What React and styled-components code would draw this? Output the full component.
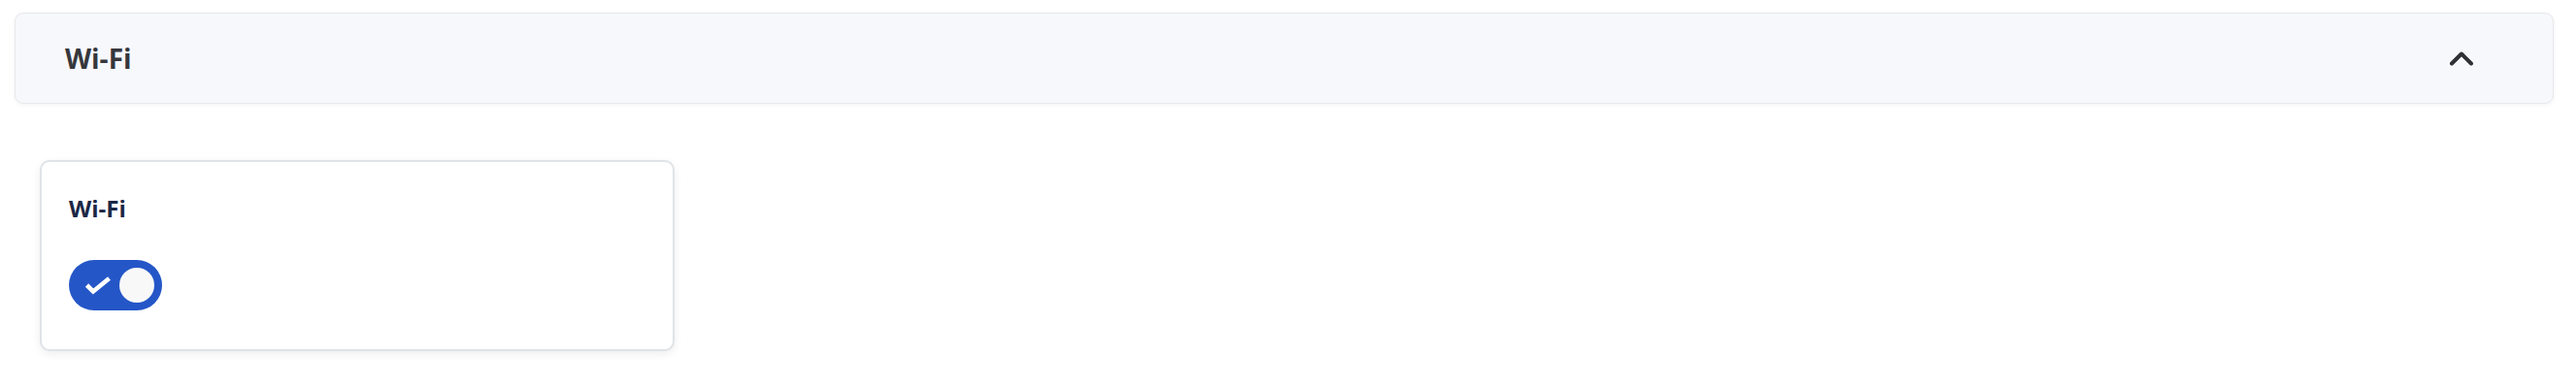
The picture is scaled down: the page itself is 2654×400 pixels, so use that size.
import React, { useState } from 'react';
import styled, { createGlobalStyle } from 'styled-components';

const GlobalStyle = createGlobalStyle`
  html, body {
    margin: 0;
    padding: 0;
    background: #ffffff;
    font-family: "Open Sans", "Noto Sans", sans-serif;
  }
`;

const Page = styled.div`
  padding: 13px 23px 0 15px;
`;

const Section = styled.section`
  display: flex;
  flex-direction: column;
`;

const SectionHeader = styled.button`
  display: flex;
  align-items: center;
  justify-content: space-between;
  height: 94px;
  box-sizing: border-box;
  padding: 0 81px 0 51px;
  background: #f7f8fb;
  border: 1px solid #e8e9ec;
  border-radius: 9px;
  box-shadow: 0 1px 4px rgba(0, 0, 0, 0.06);
  cursor: pointer;
  font-family: inherit;
  text-align: left;
`;

const SectionTitle = styled.h2`
  margin: 0;
  font-size: 28px;
  font-weight: 700;
  color: #36373c;
`;

const SectionBody = styled.div`
  display: flex;
  padding: 58px 26px;
`;

const Card = styled.div`
  width: 654px;
  height: 197px;
  box-sizing: border-box;
  padding: 31px 28px;
  background: #ffffff;
  border: 2px solid #e0e3e7;
  border-radius: 10px;
  box-shadow: 0 3px 10px rgba(0, 0, 0, 0.07);
  display: flex;
  flex-direction: column;
  gap: 37px;
`;

const CardTitle = styled.h3`
  margin: 0;
  font-size: 24px;
  font-weight: 700;
  color: #1b2745;
  line-height: 33px;
`;

const Switch = styled.button`
  position: relative;
  width: 96px;
  height: 52px;
  padding: 8px;
  box-sizing: border-box;
  border: none;
  border-radius: 26px;
  background: ${(p) => (p.$on ? '#2456c7' : '#b8bcc4')};
  display: flex;
  align-items: center;
  justify-content: ${(p) => (p.$on ? 'flex-end' : 'flex-start')};
  cursor: pointer;
`;

const Knob = styled.span`
  width: 36px;
  height: 36px;
  border-radius: 50%;
  background: #f8f8f9;
`;

const CheckMark = styled.svg`
  position: absolute;
  left: 16px;
  top: 16px;
`;

function Chevron() {
  return (
    <svg width="26" height="18" viewBox="0 0 26 18" fill="none">
      <path d="M3 14.5 L13 4.5 L23 14.5" stroke="#2f3035" strokeWidth="4" strokeLinecap="round" strokeLinejoin="round" />
    </svg>
  );
}

export default function App() {
  const [on, setOn] = useState(true);
  return (
    <Page>
      <GlobalStyle />
      <Section>
        <SectionHeader>
          <SectionTitle>Wi-Fi</SectionTitle>
          <Chevron />
        </SectionHeader>
        <SectionBody>
          <Card>
            <CardTitle>Wi-Fi</CardTitle>
            <Switch $on={on} onClick={() => setOn(!on)} aria-pressed={on}>
              {on && (
                <CheckMark width="28" height="20" viewBox="0 0 28 20">
                  <path d="M2.5 10 L9 16.5 L25.5 3" stroke="#ffffff" strokeWidth="4.6" fill="none" />
                </CheckMark>
              )}
              <Knob />
            </Switch>
          </Card>
        </SectionBody>
      </Section>
    </Page>
  );
}
